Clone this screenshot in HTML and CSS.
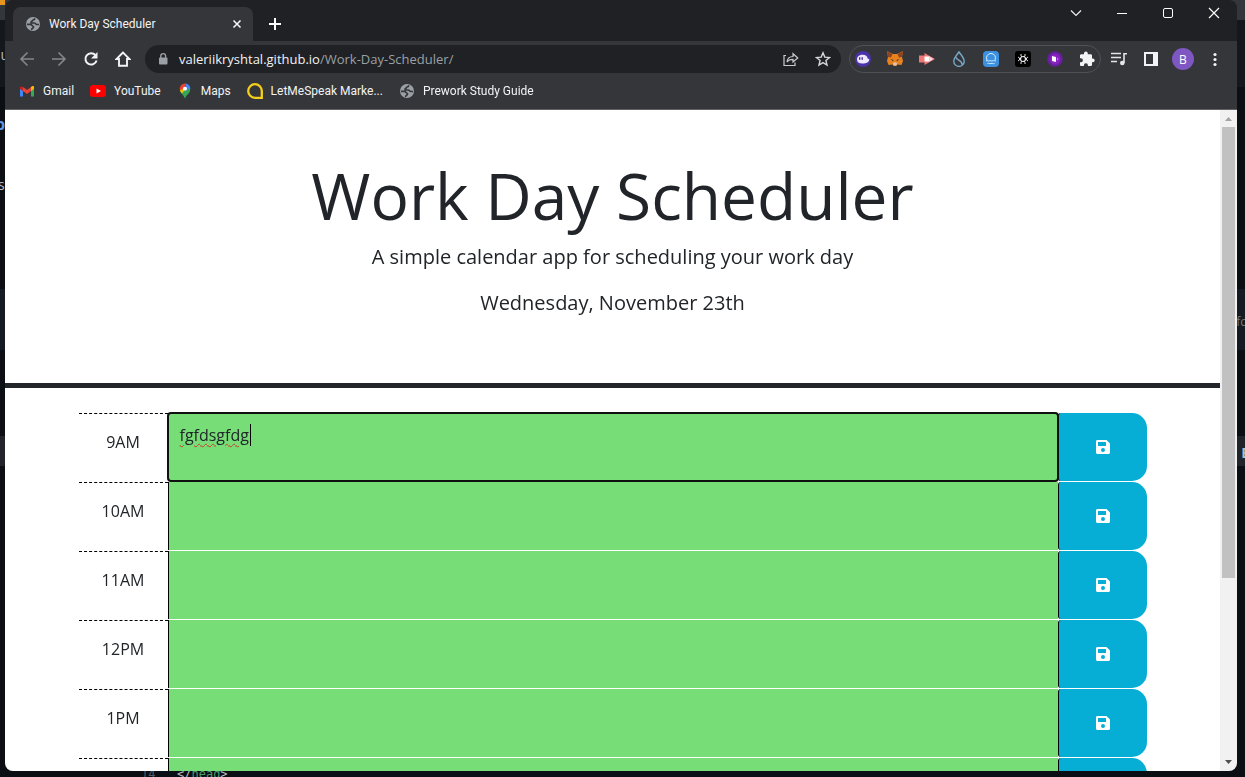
FILE: index.html
```html
<!DOCTYPE html>
<html lang="en">
<head>
<meta charset="utf-8">
<meta name="viewport" content="width=device-width, initial-scale=1">
<title>Work Day Scheduler</title>
<link rel="stylesheet" href="styles.css">
</head>
<body>
<svg class="defs" aria-hidden="true">
  <symbol id="globe" viewBox="0 0 16 16"><circle cx="8" cy="8" r="7" fill="#9aa0a6"/><path d="M9.500 2.300c.4 1-.4 1.500-1.500 1.700-.9.200-.5 1.300-1.500 1.600-.8.300-.5 1.400.4 1.400h2.600c1 0 1 1.500 2.300 1.500h2.200M2 8.300h3.300c1.500 0 1.500 1.700 2.700 1.900 1 .3.500 1.800-.5 2-.8.200-.8 1-.8 1.700" fill="none" stroke="#35363a" stroke-width="1.700"/></symbol>
  <symbol id="floppy" viewBox="0 0 448 512"><path fill="#fff" d="M434 130 350 46c-9-9-21-14-34-14H48C21 32 0 53 0 80v352c0 27 21 48 48 48h352c27 0 48-21 48-48V164c0-13-5-25-14-34zM224 416a64 64 0 1 1 0-128 64 64 0 0 1 0 128zm96-305v101c0 7-5 12-12 12H76c-7 0-12-5-12-12V108c0-7 5-12 12-12h229c3 0 6 1 8 4l4 3c2 2 3 5 3 8z"/></symbol>
</svg>

<div class="backdrop" aria-hidden="true">
  <span class="peek peek-tab"></span>
  <span class="peek peek-ju">ju</span>
  <span class="peek peek-b">b</span>
  <span class="peek peek-s">s</span>
  <span class="peek peek-fc">fc</span>
  <span class="peek peek-e">E</span>
  <span class="peek peek-line">14</span>
  <code class="peek peek-code">&lt;/<b>head</b>&gt;</code>
</div>

<div class="window">
  <header class="tabstrip">
    <div class="tab">
      <svg class="icon"><use href="#globe"/></svg>
      <span class="tab-title">Work Day Scheduler</span>
      <button class="tab-button" aria-label="Close tab"><svg class="icon" viewBox="0 0 16 16"><path d="m4.500 4.500 7 7m0-7-7 7" stroke="#f1f3f4" stroke-width="1.600"/></svg></button>
    </div>
    <button class="tab-button new-tab" aria-label="New tab"><svg class="icon" viewBox="0 0 16 16"><path d="M8 2v12M2 8h12" stroke="#fff" stroke-width="2"/></svg></button>
    <div class="controls">
      <button aria-label="Search tabs"><svg class="icon" viewBox="0 0 16 16"><path d="m3 5.500 5 5 5-5" fill="none" stroke="#eee" stroke-width="1.200"/></svg></button>
      <button aria-label="Minimize"><svg class="icon" viewBox="0 0 16 16"><path d="M3 8.500h10" stroke="#fff"/></svg></button>
      <button aria-label="Maximize"><svg class="icon" viewBox="0 0 16 16"><rect x="3.500" y="3.500" width="9" height="9" rx="1.500" fill="none" stroke="#fff"/></svg></button>
      <button aria-label="Close"><svg class="icon" viewBox="0 0 16 16"><path d="m3 3 10 10M13 3 3 13" stroke="#fff" stroke-width="1.200"/></svg></button>
    </div>
  </header>

  <nav class="toolbar" aria-label="Navigation">
    <button class="tool" aria-label="Back"><svg class="icon" viewBox="0 0 16 16"><path d="M15 8H2m6.500-6.500L2 8l6.500 6.500" fill="none" stroke="#85868a" stroke-width="1.600"/></svg></button>
    <button class="tool" aria-label="Forward"><svg class="icon" viewBox="0 0 16 16"><path d="M1 8h13M7.500 1.500 14 8l-6.500 6.500" fill="none" stroke="#85868a" stroke-width="1.600"/></svg></button>
    <button class="tool" aria-label="Reload"><svg class="icon" viewBox="0 0 16 16"><path d="M12.500 4.200A5.700 5.700 0 1 0 13.600 9.500" fill="none" stroke="#f1f3f4" stroke-width="2"/><path d="M14.500 1v6.500H8z" fill="#f1f3f4"/></svg></button>
    <button class="tool" aria-label="Home"><svg class="icon" viewBox="0 0 16 16"><path d="M8 1.500 1.500 8H4v6.700h8V8h2.500z" fill="none" stroke="#f1f3f4" stroke-width="1.900"/></svg></button>
    <div class="omnibox">
      <svg class="icon" viewBox="0 0 16 16"><rect x="4" y="6.500" width="8.500" height="7" rx="1" fill="#9aa0a6"/><path d="M5.800 7V5a2.400 2.400 0 0 1 4.800 0v2" fill="none" stroke="#9aa0a6" stroke-width="1.400"/></svg>
      <a class="url" href="#">valeriikryshtal.github.io<span class="url-path">/Work-Day-Scheduler/</span></a>
      <button class="inner-tool" aria-label="Share"><svg class="icon" viewBox="0 0 16 16"><path d="M3 4.500H1v10h11v-3M4 11c.4-4 2.500-5.500 6-5.500V2.700L14.800 7 10 11V8.300c-3 0-4.800.8-6 2.700z" fill="none" stroke="#c8cacd" stroke-width="1.200"/></svg></button>
      <button class="inner-tool" aria-label="Bookmark"><svg class="icon" viewBox="0 0 16 16"><path d="m8 1.800 1.800 4.300 4.700.4-3.600 3 1.100 4.600L8 11.600l-4 2.500 1.100-4.600-3.600-3 4.700-.4z" fill="none" stroke="#d5d7da" stroke-width="1.400"/></svg></button>
    </div>
    <div class="extensions">
      <button aria-label="Phantom"><svg class="icon" viewBox="0 0 16 16"><circle cx="8" cy="8" r="8" fill="#4b32a8"/><path d="M2 8.500c0-3 2.500-4.700 5.700-4.700 3.300 0 4.800 1.800 4.900 3.700.9.700 1.800.3 1.700 1-.3 2.600-3 4.200-7 4.100C4 12.600 2 11 2 8.500z" fill="#efe9ff"/><path d="M4.700 6.300v2.400M7.200 6.300v2.400" stroke="#39278f" stroke-width="1.300"/></svg></button>
      <button aria-label="MetaMask"><svg class="icon" viewBox="0 0 16 16"><path d="m0 0 6 3h4l6-3-1 6 1 4-1.500 4-4-.5L9 15H7l-1.500-1.500-4 .5L0 10l1-4z" fill="#e8821e"/><path d="m0 0 5.500 3L4 6.500 1 6zM16 0l-5.500 3L12 6.500l3-.5z" fill="#8d4420"/><path d="m3.500 8 3 1-.5 1.200zM12.500 8l-3 1 .5 1.200z" fill="#2b3540"/><path d="m6 12 1-.5h2l1 .5-.5 2.500h-3z" fill="#d8c5b4"/></svg></button>
      <button aria-label="Video recorder"><svg class="icon" viewBox="0 0 16 16"><path d="M0 4.500h5.500V2L16 8 5.500 14v-2.500H0z" fill="#f17878"/><path d="M5.500 5.500h5v5h-5z" fill="#fff"/><path d="m10.500 5.500 4 2.500-4 2.500z" fill="#fbdada"/></svg></button>
      <button aria-label="Sui Wallet"><svg class="icon" viewBox="0 0 16 16"><path d="M8 .8C6 4 2.800 7 2.800 10.200a5.200 5.200 0 0 0 10.400 0C13.200 7 10 4 8 .8zM5.300 6.300c-.3 3.200 6 2.700 5.800 7.500" fill="none" stroke="#77a7c7" stroke-width="1.400"/></svg></button>
      <button aria-label="Pontem"><svg class="icon" viewBox="0 0 16 16"><rect width="16" height="16" rx="4" fill="#3b91e0"/><path d="M4 9a4.500 4.500 0 1 1 8 0M3 9.800c1.500-.8 2 .8 3.400 0s2 .8 3.400 0 2 .8 3.200 0M4.500 12.500c1.500-.8 2 .8 3.500 0s2 .8 3.500 0" fill="none" stroke="#d9f1ff"/></svg></button>
      <button aria-label="Martian"><svg class="icon" viewBox="0 0 16 16"><rect width="16" height="16" rx="3" fill="#000"/><circle cx="8" cy="8" r="2.500" fill="none" stroke="#eee" stroke-width="1.200"/><path d="M6 3v2l1 .8M10 3v2l-1 .8M6 13v-2l1-.8M10 13v-2l-1-.8M3 6l1.500 1v2L3 10M13 6l-1.500 1v2l1.500 1" fill="none" stroke="#ddd"/></svg></button>
      <button aria-label="Purple wallet"><svg class="icon" viewBox="0 0 16 16"><circle cx="8" cy="8" r="7.800" fill="#65209b"/><circle cx="8" cy="8" r="5.500" fill="#8622bd"/><path d="m5 5 4 1v5l-4-1z" fill="#fff"/><path d="M10 6.500 11.500 8 10 9.500z" fill="#b98bd6"/></svg></button>
      <button aria-label="Extensions"><svg class="icon" viewBox="0 0 16 16"><path d="M13 7.400V4.700c0-.8-.6-1.400-1.400-1.400H8.800V2.500a1.900 1.900 0 0 0-3.800 0v.8H2.400C1.600 3.300 1 3.900 1 4.700v2.500h.9a2 2 0 0 1 0 4H1v2.500c0 .8.600 1.400 1.400 1.400h2.500v-.9a2 2 0 0 1 4 0v.9h2.700c.8 0 1.400-.6 1.400-1.400v-2.500h.8a1.900 1.900 0 0 0 0-3.800z" fill="#f1f3f4"/></svg></button>
    </div>
    <button class="tool" aria-label="Media controls"><svg class="icon" viewBox="0 0 16 16"><path d="M0 2.500h10M0 6.500h10M0 10.500h6M13 12V2.800h3" fill="none" stroke="#e3e5e8" stroke-width="1.600"/><circle cx="11.300" cy="12" r="2.300" fill="#e3e5e8"/></svg></button>
    <button class="tool" aria-label="Side panel"><svg class="icon" viewBox="0 0 16 16"><path d="M1 1h14v14H1zm2 2v10h7V3z" fill="#f1f3f4" fill-rule="evenodd"/></svg></button>
    <button class="tool" aria-label="Profile"><span class="avatar">B</span></button>
    <button class="tool" aria-label="Menu"><svg class="icon" viewBox="0 0 16 16"><g fill="#f1f3f4"><circle cx="8" cy="3.500" r="1.600"/><circle cx="8" cy="8.500" r="1.600"/><circle cx="8" cy="13.500" r="1.600"/></g></svg></button>
  </nav>

  <nav class="bookmarks" aria-label="Bookmarks">
    <a href="#"><svg class="icon" viewBox="0 0 16 16"><path d="M1 4v9.500h3V7" fill="#4285f4"/><path d="M12 7v6.500h3V4" fill="#34a853"/><path d="M1 3.500 4 4v4L1 6z" fill="#c5221f"/><path d="m4 4 4 3 4-3v4l-4 3-4-3z" fill="#ea4335"/><path d="m12 4 1.300-1c1-.4 1.700.3 1.700 1v2l-3 2z" fill="#fbbc04"/></svg>Gmail</a>
    <a href="#"><svg class="icon" viewBox="0 0 16 16"><rect y="2" width="16" height="12" rx="3" fill="#f00"/><path d="m6.500 5.500 4.500 2.500-4.500 2.500z" fill="#fff"/></svg>YouTube</a>
    <a href="#"><svg class="icon" viewBox="0 0 16 16"><path d="M3.200 8C4 11 7 12 8 15.800 9 12 12 11 12.900 7.500z" fill="#34a853"/><path d="M8 .5A5.300 5.300 0 0 0 2.900 7L8 5.500z" fill="#ea4335"/><path d="M8 .5c3 0 5.200 2.300 5.300 5L9 8z" fill="#4285f4"/><path d="M2.900 7c.3 1.600 1.200 2.700 2 3.500L9.500 5z" fill="#fbbc04"/><path d="M13 4.500c.8 3-.5 5-2.500 7L7 10z" fill="#34a853"/><circle cx="8" cy="5.800" r="2" fill="#fff"/></svg>Maps</a>
    <a href="#"><svg class="icon" viewBox="0 0 16 16"><path d="M8 1.200a6.800 6.800 0 0 0 0 13.600h6.800V8A6.800 6.800 0 0 0 8 1.200z" fill="none" stroke="#f5cf18" stroke-width="2.300"/></svg>LetMeSpeak Marke...</a>
    <a href="#"><svg class="icon"><use href="#globe"/></svg>Prework Study Guide</a>
  </nav>

  <div class="viewport">
    <main class="page">
      <section class="hero">
        <h1>Work Day Scheduler</h1>
        <p>A simple calendar app for scheduling your work day</p>
        <p>Wednesday, November 23th</p>
      </section>
      <div class="schedule">
        <div class="row"><label class="hour" for="h9">9AM</label><div class="entry"><textarea class="active" id="h9" spellcheck="false">fgfdsgfdg</textarea><span class="caret"></span></div><button class="save" aria-label="Save 9AM"><svg class="icon"><use href="#floppy"/></svg></button></div>
        <div class="row"><label class="hour" for="h10">10AM</label><div class="entry"><textarea id="h10"></textarea></div><button class="save" aria-label="Save 10AM"><svg class="icon"><use href="#floppy"/></svg></button></div>
        <div class="row"><label class="hour" for="h11">11AM</label><div class="entry"><textarea id="h11"></textarea></div><button class="save" aria-label="Save 11AM"><svg class="icon"><use href="#floppy"/></svg></button></div>
        <div class="row"><label class="hour" for="h12">12PM</label><div class="entry"><textarea id="h12"></textarea></div><button class="save" aria-label="Save 12PM"><svg class="icon"><use href="#floppy"/></svg></button></div>
        <div class="row"><label class="hour" for="h13">1PM</label><div class="entry"><textarea id="h13"></textarea></div><button class="save" aria-label="Save 1PM"><svg class="icon"><use href="#floppy"/></svg></button></div>
        <div class="row"><div class="hour"></div><div class="entry"><textarea aria-label="Next hour"></textarea></div><button class="save" aria-label="Save next hour"></button></div>
      </div>
    </main>
    <div class="scrollbar" aria-hidden="true">
      <svg viewBox="0 0 17 17"><path d="m5 11 3.500-4 3.500 4z" fill="#a3a3a3"/></svg>
      <div class="track"><div class="thumb"></div></div>
      <svg viewBox="0 0 17 17"><path d="m5 6 3.500 4L12 6z" fill="#505050"/></svg>
    </div>
  </div>
</div>
</body>
</html>
```

FILE: styles.css
```css
* { box-sizing: border-box; }
body { margin: 0; height: 100vh; overflow: hidden; background: #0d1117; font-family: "Open Sans", "Noto Sans", sans-serif; }
button { display: grid; place-items: center; padding: 0; border: 0; background: none; font: inherit; }
a { color: inherit; text-decoration: none; }
.defs { position: absolute; width: 0; height: 0; }
.icon { display: block; flex: none; width: 16px; height: 16px; }

/* Slivers of the editor behind the browser window */
.backdrop { position: fixed; inset: 0; overflow: hidden; color: #b9bbc5; font-size: 14px; line-height: 18px; background: linear-gradient(#33363a 0 20px, #14171c 20px 87px, #0b0e13 87px 289px, #161a22 289px 350px, #0b0e13 350px 436px, #22242c 436px 466px, #0b0e13 466px); }
.peek { position: absolute; }
.peek-tab { left: 0; top: 0; width: 5px; height: 5px; background: #e8951f; }
.peek-ju { left: -3px; top: 46px; }
.peek-b { left: -5px; top: 115px; color: #5f93e8; font-size: 16px; font-weight: 700; }
.peek-s { left: -2px; top: 176px; }
.peek-fc { right: -1px; top: 313px; color: #777; font-size: 12px; }
.peek-e { right: -4px; top: 444px; font-weight: 700; }
.peek-line, .peek-code { bottom: -6px; font: 12px/18px "DejaVu Sans Mono", monospace; }
.peek-line { left: 141px; color: #555a64; }
.peek-code { left: 177px; }
.peek-code b { color: #4d9a6b; font-weight: 400; }

.window { position: relative; display: flex; flex-direction: column; height: calc(100vh - 6px); margin: 0 8px 0 5px; overflow: hidden; border-radius: 8px; background: #35363a; color: #f1f3f4; font-size: 12px; }

.tabstrip { display: flex; height: 41px; padding: 7px 0 0 8px; background: #202124; }
.tab { display: flex; align-items: center; gap: 8px; width: 240px; padding: 0 8px 0 12px; border-radius: 8px 8px 0 0; background: #35363a; }
.tab-title { flex: 1; white-space: nowrap; }
.tab-title, .bookmarks { font-family: Roboto, sans-serif; }
.new-tab { width: 44px; }
.controls { display: flex; height: 26px; margin: -7px 0 0 auto; }
.controls button { width: 46px; }

.toolbar { display: flex; align-items: center; height: 36px; padding: 0 6px; }
.tool { width: 32px; height: 28px; }
.omnibox { display: flex; flex: 1; align-items: center; height: 28px; margin: 0 8px 0 6px; padding: 0 2px 0 10px; border-radius: 14px; background: #202124; font-size: 13px; }
.url { flex: 1; margin-left: 8px; white-space: nowrap; }
.url-path { color: #9aa0a6; }
.inner-tool { width: 32px; height: 28px; }
.extensions { display: flex; align-items: center; gap: 16px; height: 28px; margin-right: 2px; padding: 0 5px; border: 1px solid #505155; border-radius: 14px; }
.avatar { display: grid; place-items: center; width: 22px; height: 22px; border-radius: 50%; background: #7e57c2; color: #fff; font-size: 12px; }

.bookmarks { display: flex; align-items: center; gap: 16px; height: 33px; padding: 0 14px 4px; border-bottom: 1px solid #606164; }
.bookmarks a { display: flex; align-items: center; gap: 8px; white-space: nowrap; }

.viewport { display: flex; flex: 1; min-height: 0; background: #fff; }
.page { flex: 1; min-width: 0; overflow: hidden; color: #212529; font-size: 16px; line-height: 24px; }
.hero { padding: 48px 24px; border-bottom: 5px solid #222529; text-align: center; }
.hero h1 { margin: 0 0 8px; font-size: 64px; font-weight: 400; line-height: 76px; }
.hero p { margin: 0 0 16px; font-size: 20px; line-height: 30px; }
.hero p:last-child { margin-bottom: 17px; }
.schedule { max-width: 1068px; margin: 25px auto 0; }
.row { display: grid; grid-template-columns: 1fr 10fr 1fr; height: 69px; }
.hour { padding-top: 16px; border-top: 1px dashed #000; text-align: center; }
.entry { position: relative; padding-bottom: 1px; }
.entry textarea { display: block; width: 100%; height: 100%; padding: 10px 11px; border: 0; border-left: 1px solid #000; border-radius: 0; background: #77dd77; color: #212529; font: inherit; resize: none; }
.entry .active { position: relative; border-radius: 3px; outline: 2px solid #101010; outline-offset: -1px; text-decoration: underline wavy #d03a2a 1px; text-underline-offset: 2px; }
.caret { position: absolute; left: 82px; top: 11px; width: 1px; height: 22px; background: #000; }
.save { height: 68px; border-left: 1px solid #000; border-radius: 3px 15px 15px 3px; background: #06aed5; }

.scrollbar { display: flex; flex-direction: column; width: 17px; background: #f1f1f1; }
.scrollbar svg { width: 17px; height: 17px; }
.track { flex: 1; padding: 0 2px; }
.thumb { height: 72%; background: #c1c1c1; }
```
